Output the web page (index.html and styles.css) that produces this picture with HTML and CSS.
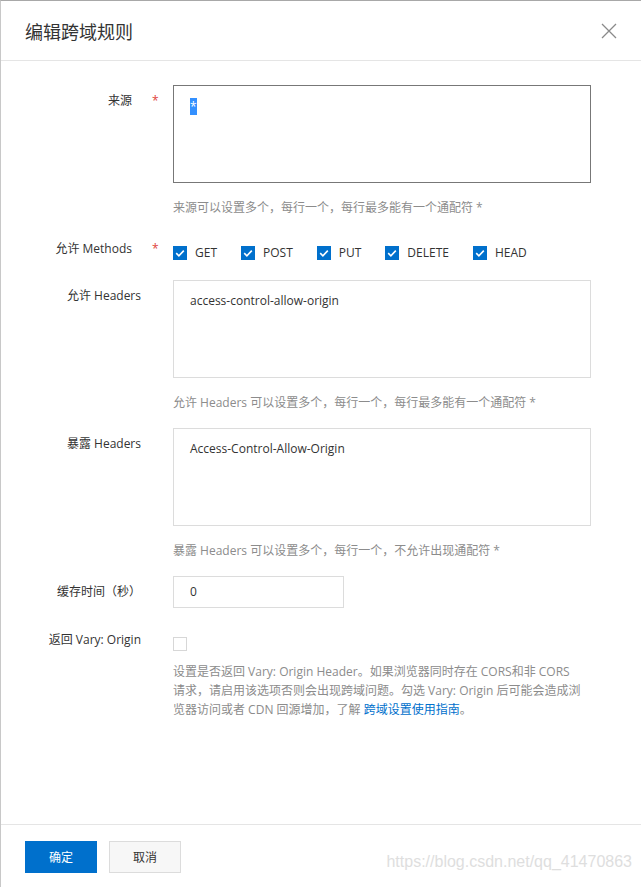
FILE: index.html
```html
<!DOCTYPE html>
<html lang="zh-CN">
<head>
  <meta charset="UTF-8" />
  <meta name="viewport" content="width=device-width, initial-scale=1.0"/>
  <title>编辑跨域规则</title>
  <link rel="stylesheet" href="styles.css">
</head>
<body>

  <div class="dialog">
    <div class="dialog-header">
      <h2 class="dialog-title">编辑跨域规则</h2>
      <span class="dialog-close">
        <svg width="16" height="16" viewBox="0 0 16 16"><path d="M1 1L15 15M15 1L1 15" stroke="#8a8a8a" stroke-width="1.3" fill="none"/></svg>
      </span>
    </div>

    <div class="dialog-body">
      <!-- 来源 -->
      <div class="form-item">
        <label class="form-label required">来源<span class="req">*</span></label>
        <div class="form-control">
          <div class="textarea focused"><span class="selected">*</span></div>
          <p class="help">来源可以设置多个，每行一个，每行最多能有一个通配符 *</p>
        </div>
      </div>

      <!-- Methods -->
      <div class="form-item">
        <label class="form-label required">允许 Methods<span class="req">*</span></label>
        <div class="form-control">
          <div class="checks">
            <span class="check"><span class="box checked"><svg width="14" height="14" viewBox="0 0 14 14"><path d="M3.2 7.2L5.9 9.8L10.8 4.6" stroke="#fff" stroke-width="1.6" fill="none"/></svg></span>GET</span>
            <span class="check"><span class="box checked"><svg width="14" height="14" viewBox="0 0 14 14"><path d="M3.2 7.2L5.9 9.8L10.8 4.6" stroke="#fff" stroke-width="1.6" fill="none"/></svg></span>POST</span>
            <span class="check"><span class="box checked"><svg width="14" height="14" viewBox="0 0 14 14"><path d="M3.2 7.2L5.9 9.8L10.8 4.6" stroke="#fff" stroke-width="1.6" fill="none"/></svg></span>PUT</span>
            <span class="check"><span class="box checked"><svg width="14" height="14" viewBox="0 0 14 14"><path d="M3.2 7.2L5.9 9.8L10.8 4.6" stroke="#fff" stroke-width="1.6" fill="none"/></svg></span>DELETE</span>
            <span class="check"><span class="box checked"><svg width="14" height="14" viewBox="0 0 14 14"><path d="M3.2 7.2L5.9 9.8L10.8 4.6" stroke="#fff" stroke-width="1.6" fill="none"/></svg></span>HEAD</span>
          </div>
        </div>
      </div>

      <!-- 允许 Headers -->
      <div class="form-item">
        <label class="form-label">允许 Headers</label>
        <div class="form-control">
          <div class="textarea">access-control-allow-origin</div>
          <p class="help">允许 Headers 可以设置多个，每行一个，每行最多能有一个通配符 *</p>
        </div>
      </div>

      <!-- 暴露 Headers -->
      <div class="form-item">
        <label class="form-label">暴露 Headers</label>
        <div class="form-control">
          <div class="textarea">Access-Control-Allow-Origin</div>
          <p class="help">暴露 Headers 可以设置多个，每行一个，不允许出现通配符 *</p>
        </div>
      </div>

      <!-- 缓存时间 -->
      <div class="form-item">
        <label class="form-label">缓存时间（秒）</label>
        <div class="form-control">
          <div class="input">0</div>
        </div>
      </div>

      <!-- Vary -->
      <div class="form-item">
        <label class="form-label">返回 Vary: Origin</label>
        <div class="form-control">
          <div class="checks">
            <span class="box"></span>
          </div>
          <p class="desc">设置是否返回 Vary: Origin Header。如果浏览器同时存在 CORS和非 CORS<br>请求，请启用该选项否则会出现跨域问题。勾选 Vary: Origin 后可能会造成浏<br>览器访问或者 CDN 回源增加，了解 <a href="#">跨域设置使用指南</a>。</p>
        </div>
      </div>
    </div>

    <div class="dialog-footer">
      <button class="btn btn-primary">确定</button>
      <button class="btn">取消</button>
    </div>

    <span class="watermark">https://blog.csdn.net/qq_41470863</span>
  </div>

</body>
</html>
```

FILE: styles.css
```css
html, body {
  margin: 0;
  height: 100%;
}
body {
  font-family: "Open Sans", "Noto Sans CJK SC", sans-serif;
  font-size: 12px;
  color: #333;
  background: #fff;
}
.dialog {
  height: 100vh;
  box-sizing: border-box;
  border-top: 1px solid #a8a8a8;
  border-left: 1px solid #c8c8c8;
  display: flex;
  flex-direction: column;
  position: relative;
}
.dialog-header {
  height: 59px;
  border-bottom: 1px solid #e5e5e5;
  display: flex;
  align-items: center;
  justify-content: space-between;
  padding: 0 24px;
}
.dialog-title {
  margin: 0;
  font-size: 18px;
  font-weight: normal;
  color: #333;
}
.dialog-close {
  display: flex;
}
.dialog-body {
  flex: 1;
  padding-top: 24px;
}
.form-item {
  display: flex;
  margin-bottom: 16px;
}
.form-label {
  width: 140px;
  flex-shrink: 0;
  box-sizing: border-box;
  text-align: right;
  line-height: 18px;
  padding-top: 7px;
  position: relative;
}
.form-label.required {
  padding-right: 9px;
}
.req {
  position: absolute;
  left: 151px;
  top: 7px;
  color: #e0453a;
}
.form-control {
  margin-left: 32px;
  width: 418px;
}
.textarea {
  height: 98px;
  box-sizing: border-box;
  border: 1px solid #dcdcdc;
  padding: 11px 16px;
  line-height: 18px;
}
.textarea.focused {
  border-color: #777;
  padding-top: 12px;
}
.selected {
  background: #3390ff;
  color: #fff;
  display: inline-block;
  line-height: 17px;
}
.help {
  margin: 16px 0 0;
  line-height: 18px;
  color: #8c8c8c;
}
.checks {
  display: flex;
  align-items: center;
  padding: 13px 0 4px;
}
.check {
  display: inline-flex;
  align-items: center;
  gap: 8px;
  line-height: 14px;
  margin-right: 24px;
}
.box {
  width: 14px;
  height: 14px;
  box-sizing: border-box;
  border: 1px solid #d7d7d7;
  background: #fff;
  display: inline-flex;
}
.box.checked {
  border: none;
  background: #0070cc;
}
.input {
  width: 171px;
  height: 32px;
  box-sizing: border-box;
  border: 1px solid #dcdcdc;
  padding: 0 16px;
  line-height: 30px;
}
.desc {
  margin: 7px 0 0;
  line-height: 19px;
  color: #8c8c8c;
  white-space: nowrap;
}
.desc a {
  color: #0070cc;
  text-decoration: none;
}
.dialog-footer {
  border-top: 1px solid #e5e5e5;
  padding: 16px 24px 14px;
  display: flex;
  gap: 12px;
}
.btn {
  width: 72px;
  height: 32px;
  font-family: inherit;
  font-size: 12px;
  color: #333;
  background: #f7f7f7;
  border: 1px solid #dcdcdc;
  padding: 0;
}
.btn-primary {
  background: #0070cc;
  border-color: #0070cc;
  color: #fff;
}
.watermark {
  position: absolute;
  right: 9px;
  bottom: 16px;
  font-family: "Liberation Sans", sans-serif;
  font-size: 16px;
  color: #dedede;
}
```
